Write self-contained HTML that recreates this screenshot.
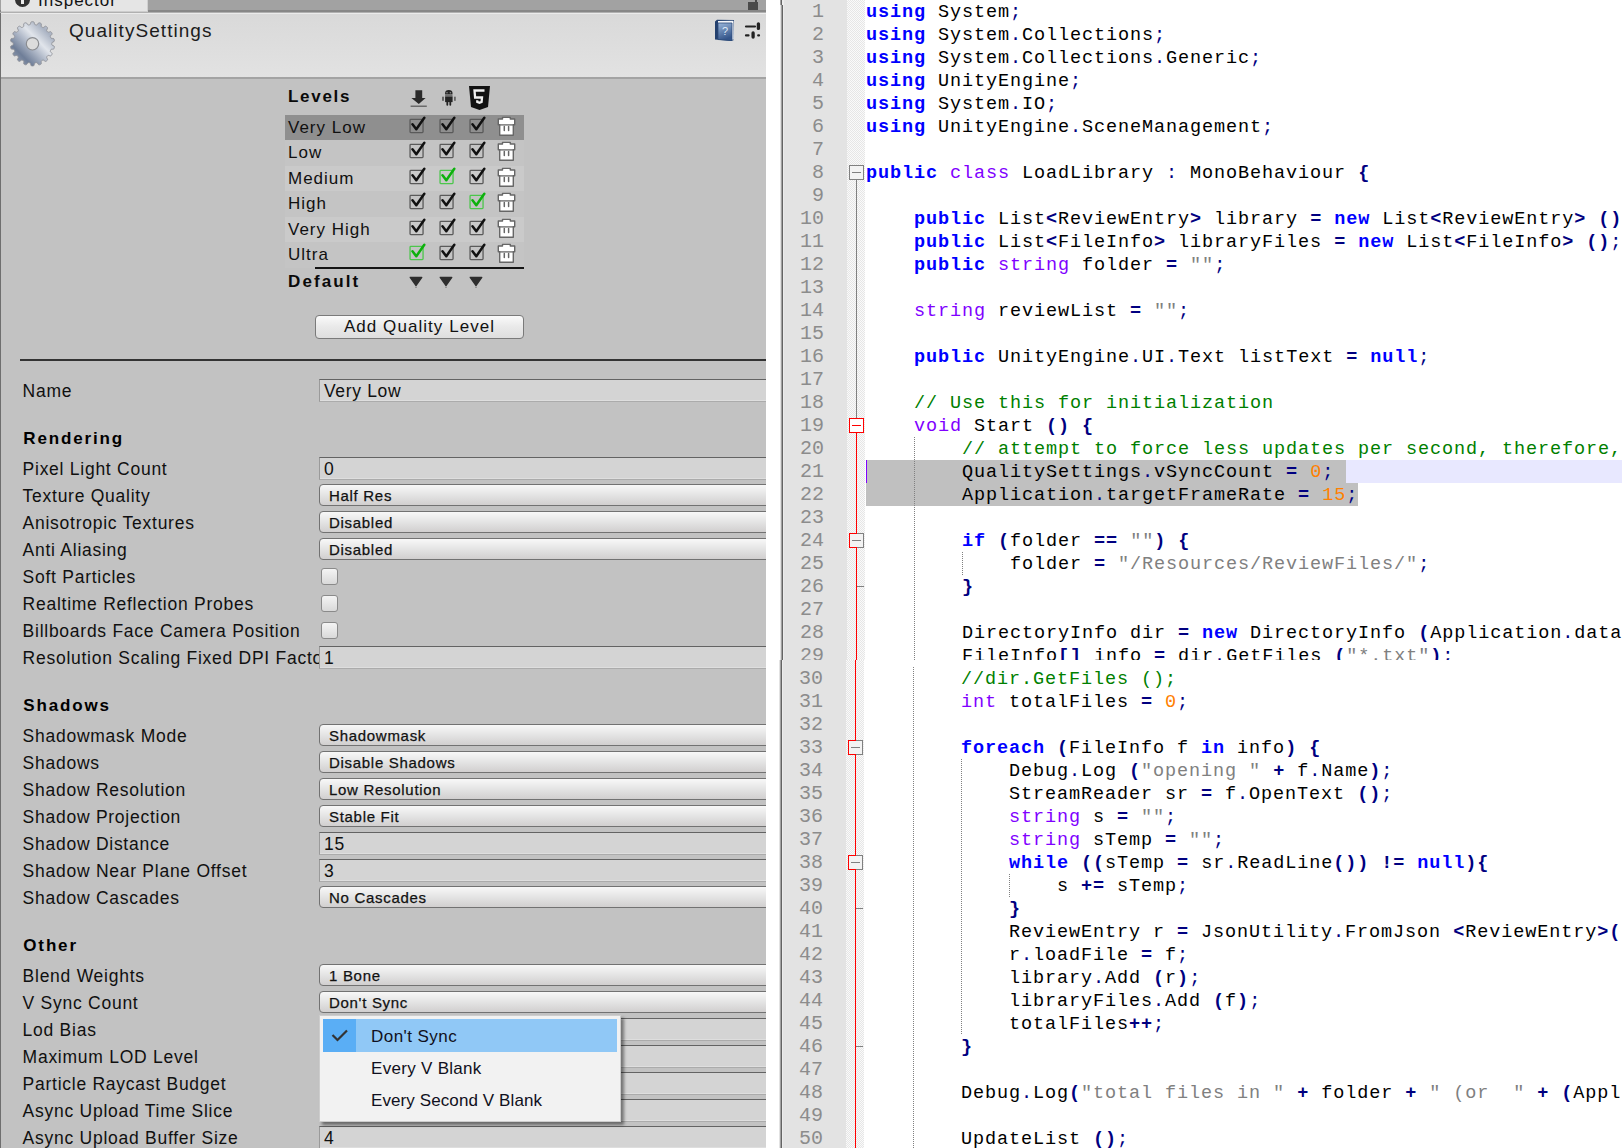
<!DOCTYPE html><html><head><meta charset="utf-8"><style>
*{margin:0;padding:0;box-sizing:border-box}
html,body{width:1622px;height:1148px;overflow:hidden;background:#fff;position:relative}
.abs{position:absolute}
#unity{position:absolute;left:0;top:0;width:766px;height:1148px;background:#c2c2c2;overflow:hidden;font-family:"Liberation Sans",sans-serif;color:#111}
#npp{position:absolute;left:781px;top:0;width:841px;height:1148px;background:#fff;overflow:hidden}
#vline{position:absolute;left:781px;top:5px;width:2px;height:1143px;background:#5e5e5e}
#lnm{position:absolute;left:783px;top:0;width:64px;height:1148px;background:#e3e3e3;border-left:1px solid #ececec}
#fold{position:absolute;left:847px;top:0;width:18px;height:1148px;
 background-color:#fafafa;
 background-image:linear-gradient(45deg,#e6e6e6 25%,transparent 25%,transparent 75%,#e6e6e6 75%),linear-gradient(45deg,#e6e6e6 25%,transparent 25%,transparent 75%,#e6e6e6 75%);
 background-size:2px 2px;background-position:0 0,1px 1px}
#code{position:absolute;left:866px;top:0;width:756px;height:1148px;overflow:hidden;font-family:"Liberation Mono",monospace;font-size:18.5px;letter-spacing:0.9px;line-height:23px}
.ln{position:absolute;left:0;height:23px;white-space:pre;color:#000}
.num{position:absolute;left:783px;width:41px;text-align:right;height:23px;font-family:"Liberation Mono",monospace;font-size:20px;line-height:23px;color:#8c8c8c}
i{font-style:normal}
.kw{color:#0000ff;font-weight:bold}
.ty{color:#8000ff}
.op{color:#000080;font-weight:bold}
.pu{color:#000080}
.st{color:#808080}
.nu{color:#ff8000}
.cm{color:#008000}

.lbl{position:absolute;left:22.6px;font-size:17.5px;letter-spacing:0.74px;white-space:pre;color:#101010;height:20px;line-height:20px}
.hdr{position:absolute;left:23.3px;font-size:17px;font-weight:bold;letter-spacing:1.85px;white-space:pre;color:#000;height:20px;line-height:20px}
.tf{position:absolute;left:319px;width:460px;height:23px;background:#d4d4d4;border-top:1px solid #636363;border-left:1px solid #9a9a9a;border-bottom:1px solid #ababab;box-shadow:inset 0 -1px 0 #dedede}
.tf span{position:absolute;left:4px;top:1px;font-size:17.5px;letter-spacing:0.65px;line-height:20px;color:#101010;white-space:pre}
.pp{position:absolute;left:319px;width:470px;height:22px;border:1px solid #727272;border-radius:4px;background:linear-gradient(#f8f8f8,#e4e4e4 50%,#d1cfcf)}
.pp span{position:absolute;left:9px;top:1.5px;font-size:15px;letter-spacing:0.7px;line-height:18px;color:#111;white-space:pre;-webkit-text-stroke:0.25px #111}
.cb{position:absolute;left:321px;width:17px;height:17px;border:1px solid #8a8a8a;border-radius:3px;background:linear-gradient(#f4f4f4,#d9d9d9)}
.lvl{position:absolute;left:288px;font-size:17px;letter-spacing:1px;white-space:pre;color:#101010;line-height:20px}
.lrow{position:absolute;left:285px;width:239px}
.chk{position:absolute;width:16px;height:16px}
</style></head><body><div id="unity"><div class="abs" style="left:0;top:0;width:1px;height:1148px;background:#6e6e6e"></div><div class="abs" style="left:0;top:0;width:766px;height:13px;background:#a2a2a2;border-bottom:1px solid #b0b0b0;box-shadow:inset 0 -2px 0 #878787"></div><div class="abs" style="left:1px;top:0;width:147px;height:12px;background:#e5e5e5;border-bottom:1px solid #cdcdcd;border-right:1px solid #d0d0d0;overflow:hidden"><div class="abs" style="left:14px;top:-8px;width:15px;height:15px;border-radius:50%;background:#333"></div><div class="abs" style="left:20px;top:0;width:3px;height:4px;background:#eee"></div><div class="abs" style="left:37px;top:-9px;font-size:17px;line-height:20px;letter-spacing:1px;color:#111;font-family:'Liberation Sans',sans-serif">Inspector</div></div><div class="abs" style="left:748px;top:2px;width:10px;height:8px;background:#4a4a4a"></div><div class="abs" style="left:755px;top:0;width:2px;height:3px;background:#4a4a4a"></div><div class="abs" style="left:1px;top:13px;width:765px;height:66px;background:linear-gradient(#d9d9d9,#e2e2e2);border-top:1px solid #ebebeb;border-bottom:2px solid #a3a3a3"></div><svg class="abs" style="left:0;top:0" width="70" height="78" viewBox="0 0 70 78"><defs><linearGradient id="gg" x1="0" y1="1" x2="1" y2="0"><stop offset="0" stop-color="#a3adbe"/><stop offset="0.25" stop-color="#6f7e98"/><stop offset="0.48" stop-color="#b9c1cf"/><stop offset="0.6" stop-color="#e1e5eb"/><stop offset="0.8" stop-color="#a9b2c2"/><stop offset="1" stop-color="#d3d8e0"/></linearGradient></defs><path d="M32.50 21.65 L32.89 21.66 L33.27 21.69 L33.65 21.81 L34.01 22.20 L34.30 23.18 L34.56 24.16 L34.86 24.57 L35.18 24.71 L35.51 24.78 L35.84 24.84 L36.17 24.90 L36.51 24.94 L36.86 24.92 L37.28 24.64 L37.86 23.81 L38.47 22.99 L38.94 22.74 L39.34 22.76 L39.71 22.86 L40.08 22.99 L40.44 23.13 L40.79 23.29 L41.10 23.53 L41.31 24.02 L41.25 25.04 L41.16 26.05 L41.30 26.53 L41.55 26.78 L41.84 26.96 L42.12 27.13 L42.42 27.29 L42.72 27.45 L43.05 27.55 L43.54 27.43 L44.37 26.84 L45.23 26.28 L45.75 26.21 L46.12 26.37 L46.44 26.59 L46.74 26.83 L47.03 27.09 L47.30 27.36 L47.52 27.69 L47.54 28.22 L47.14 29.16 L46.70 30.08 L46.67 30.58 L46.83 30.90 L47.03 31.17 L47.25 31.43 L47.46 31.68 L47.69 31.93 L47.98 32.14 L48.48 32.19 L49.46 31.93 L50.45 31.69 L50.97 31.81 L51.26 32.08 L51.48 32.39 L51.68 32.72 L51.87 33.06 L52.03 33.42 L52.12 33.80 L51.96 34.31 L51.26 35.05 L50.54 35.77 L50.34 36.23 L50.38 36.58 L50.48 36.90 L50.59 37.22 L50.71 37.53 L50.84 37.84 L51.03 38.13 L51.48 38.36 L52.49 38.44 L53.51 38.56 L53.96 38.85 L54.14 39.20 L54.24 39.57 L54.31 39.95 L54.37 40.34 L54.40 40.72 L54.36 41.12 L54.03 41.54 L53.12 42.00 L52.20 42.42 L51.85 42.79 L51.77 43.13 L51.75 43.46 L51.75 43.80 L51.75 44.14 L51.77 44.47 L51.85 44.81 L52.20 45.18 L53.12 45.60 L54.03 46.06 L54.36 46.48 L54.40 46.88 L54.37 47.26 L54.31 47.65 L54.24 48.03 L54.14 48.40 L53.96 48.75 L53.51 49.04 L52.49 49.16 L51.48 49.24 L51.03 49.47 L50.84 49.76 L50.71 50.07 L50.59 50.38 L50.48 50.70 L50.38 51.02 L50.34 51.37 L50.54 51.83 L51.26 52.55 L51.96 53.29 L52.12 53.80 L52.03 54.18 L51.87 54.54 L51.68 54.87 L51.48 55.21 L51.26 55.52 L50.97 55.79 L50.45 55.91 L49.46 55.67 L48.48 55.41 L47.98 55.46 L47.69 55.67 L47.46 55.92 L47.25 56.17 L47.03 56.43 L46.83 56.70 L46.67 57.02 L46.70 57.52 L47.14 58.44 L47.54 59.38 L47.52 59.91 L47.30 60.24 L47.03 60.51 L46.74 60.77 L46.44 61.01 L46.12 61.23 L45.75 61.39 L45.23 61.32 L44.37 60.76 L43.54 60.17 L43.05 60.05 L42.72 60.15 L42.42 60.31 L42.12 60.47 L41.84 60.64 L41.55 60.82 L41.30 61.07 L41.16 61.55 L41.25 62.56 L41.31 63.58 L41.10 64.07 L40.79 64.31 L40.44 64.47 L40.08 64.61 L39.71 64.74 L39.34 64.84 L38.94 64.86 L38.47 64.61 L37.86 63.79 L37.28 62.96 L36.86 62.68 L36.51 62.66 L36.17 62.70 L35.84 62.76 L35.51 62.82 L35.18 62.89 L34.86 63.03 L34.56 63.44 L34.30 64.42 L34.01 65.40 L33.65 65.79 L33.27 65.91 L32.89 65.94 L32.50 65.95 L32.11 65.94 L31.73 65.91 L31.35 65.79 L30.99 65.40 L30.70 64.42 L30.44 63.44 L30.14 63.03 L29.82 62.89 L29.49 62.82 L29.16 62.76 L28.83 62.70 L28.49 62.66 L28.14 62.68 L27.72 62.96 L27.14 63.79 L26.53 64.61 L26.06 64.86 L25.66 64.84 L25.29 64.74 L24.92 64.61 L24.56 64.47 L24.21 64.31 L23.90 64.07 L23.69 63.58 L23.75 62.56 L23.84 61.55 L23.70 61.07 L23.45 60.82 L23.16 60.64 L22.88 60.47 L22.58 60.31 L22.28 60.15 L21.95 60.05 L21.46 60.17 L20.63 60.76 L19.77 61.32 L19.25 61.39 L18.88 61.23 L18.56 61.01 L18.26 60.77 L17.97 60.51 L17.70 60.24 L17.48 59.91 L17.46 59.38 L17.86 58.44 L18.30 57.52 L18.33 57.02 L18.17 56.70 L17.97 56.43 L17.75 56.17 L17.54 55.92 L17.31 55.67 L17.02 55.46 L16.52 55.41 L15.54 55.67 L14.55 55.91 L14.03 55.79 L13.74 55.52 L13.52 55.21 L13.32 54.88 L13.13 54.54 L12.97 54.18 L12.88 53.80 L13.04 53.29 L13.74 52.55 L14.46 51.83 L14.66 51.37 L14.62 51.02 L14.52 50.70 L14.41 50.38 L14.29 50.07 L14.16 49.76 L13.97 49.47 L13.52 49.24 L12.51 49.16 L11.49 49.04 L11.04 48.75 L10.86 48.40 L10.76 48.03 L10.69 47.65 L10.63 47.26 L10.60 46.88 L10.64 46.48 L10.97 46.06 L11.88 45.60 L12.80 45.18 L13.15 44.81 L13.23 44.47 L13.25 44.14 L13.25 43.80 L13.25 43.46 L13.23 43.13 L13.15 42.79 L12.80 42.42 L11.88 42.00 L10.97 41.54 L10.64 41.12 L10.60 40.72 L10.63 40.34 L10.69 39.95 L10.76 39.57 L10.86 39.20 L11.04 38.85 L11.49 38.56 L12.51 38.44 L13.52 38.36 L13.97 38.13 L14.16 37.84 L14.29 37.53 L14.41 37.22 L14.52 36.90 L14.62 36.58 L14.66 36.23 L14.46 35.77 L13.74 35.05 L13.04 34.31 L12.88 33.80 L12.97 33.42 L13.13 33.06 L13.32 32.72 L13.52 32.39 L13.74 32.08 L14.03 31.81 L14.55 31.69 L15.54 31.93 L16.52 32.19 L17.02 32.14 L17.31 31.93 L17.54 31.68 L17.75 31.43 L17.97 31.17 L18.17 30.90 L18.33 30.58 L18.30 30.08 L17.86 29.16 L17.46 28.22 L17.48 27.69 L17.70 27.36 L17.97 27.09 L18.26 26.83 L18.56 26.59 L18.88 26.37 L19.25 26.21 L19.77 26.28 L20.63 26.84 L21.46 27.43 L21.95 27.55 L22.28 27.45 L22.58 27.29 L22.87 27.13 L23.16 26.96 L23.45 26.78 L23.70 26.53 L23.84 26.05 L23.75 25.04 L23.69 24.02 L23.90 23.53 L24.21 23.29 L24.56 23.13 L24.92 22.99 L25.29 22.86 L25.66 22.76 L26.06 22.74 L26.53 22.99 L27.14 23.81 L27.72 24.64 L28.14 24.92 L28.49 24.94 L28.83 24.90 L29.16 24.84 L29.49 24.78 L29.82 24.71 L30.14 24.57 L30.44 24.16 L30.70 23.18 L30.99 22.20 L31.35 21.81 L31.73 21.69 L32.11 21.66 Z" fill="url(#gg)" stroke="#8d9096" stroke-width="0.9"/><circle cx="32.5" cy="43.8" r="6.2" fill="#dcdcdc" stroke="#8a8c90" stroke-width="1.2"/></svg><div class="abs" style="left:69px;top:20px;font-size:19px;line-height:22px;letter-spacing:1.05px;color:#1c1c1c;white-space:pre">QualitySettings</div><svg class="abs" style="left:713px;top:18px" width="24" height="25" viewBox="0 0 24 25"><defs><linearGradient id="hb" x1="0" y1="0" x2="0.3" y2="1"><stop offset="0" stop-color="#9ab6da"/><stop offset="1" stop-color="#34558a"/></linearGradient></defs><path d="M2 3.5 L4 1.8 L21 2 L21 22 L18 23 L2 21.5 Z" fill="#23406e"/><path d="M5 3 L20.5 2.8 L20.8 21.8 L5 21 Z" fill="#f4f6fa"/><path d="M5 5 L19 5 L19 22.5 L5 21.5 Z" fill="url(#hb)" stroke="#2b4a7a" stroke-width="0.8"/><text x="12" y="17" font-size="11" font-family="Liberation Sans" fill="#dfe9f7" text-anchor="middle">?</text></svg><svg class="abs" style="left:743px;top:20px" width="20" height="22" viewBox="0 0 20 22"><path d="M3 6.5 H12 M3 15.4 H5.5 M15.2 15.4 H16" stroke="#222" stroke-width="2.2" stroke-linecap="round"/><path d="M15.4 3.8 V8.4 M10.1 13 V17.1" stroke="#222" stroke-width="3.3" stroke-linecap="round"/></svg><div class="abs" style="left:288px;top:87px;font-size:17px;font-weight:bold;letter-spacing:1.7px;line-height:20px;color:#0a0a0a">Levels</div><svg class="abs" style="left:409px;top:88px" width="20" height="20" viewBox="0 0 20 20"><path d="M6.4 2.2 H13.2 V9.9 H16.6 L9.8 16 L2.4 9.9 H6.4 Z" fill="#2a2a2a"/><path d="M1.6 18.2 H17.8" stroke="#555" stroke-width="1.2"/></svg><svg class="abs" style="left:440px;top:88px" width="18" height="19" viewBox="0 0 18 19"><path d="M5.1 6.6 V5 Q5.1 2.1 8.8 2.1 Q12.5 2.1 12.5 5 V6.6 Z" fill="#242424"/><circle cx="7" cy="4.7" r="0.8" fill="#8a8a8a"/><circle cx="10.4" cy="4.7" r="0.8" fill="#8a8a8a"/><rect x="5.1" y="7" width="7.4" height="1.5" fill="#707070"/><rect x="5.1" y="8.5" width="7.5" height="5.6" fill="#242424"/><rect x="2" y="8.7" width="2" height="4.1" fill="#666"/><rect x="14" y="8.7" width="1.8" height="4.1" fill="#666"/><rect x="6.4" y="13.5" width="1.8" height="4.2" rx="0.9" fill="#242424"/><rect x="9.4" y="13.5" width="1.8" height="4.2" rx="0.9" fill="#242424"/></svg><svg class="abs" style="left:468px;top:85px" width="23" height="26" viewBox="0 0 23 26"><path d="M1 1 H22 L20 22 L11.5 25 L3 22 Z" fill="#111"/><path d="M16.5 5.5 H6.5 L7.1 12.5 H14 L13.6 17 L11.5 17.7 L9.3 17 L9.2 15.3" fill="none" stroke="#eee" stroke-width="2.3"/></svg><div class="lrow" style="top:115px;height:25px;background:#8f8f8f"></div><div class="lvl" style="top:118px">Very Low</div><svg class="chk" style="left:408px;top:115px;width:18px;height:19px" width="18" height="19" viewBox="0 0 18 19"><rect x="2.05" y="4.45" width="13" height="13.1" rx="0.8" fill="none" stroke="#5a5a5a" stroke-width="1.3"/><path d="M4.5 9.3 L8.3 14.3 L16.3 2.8" fill="none" stroke="#111" stroke-width="2.5" stroke-linejoin="round" stroke-linecap="round"/></svg><svg class="chk" style="left:437.5px;top:115px;width:18px;height:19px" width="18" height="19" viewBox="0 0 18 19"><rect x="2.05" y="4.45" width="13" height="13.1" rx="0.8" fill="none" stroke="#5a5a5a" stroke-width="1.3"/><path d="M4.5 9.3 L8.3 14.3 L16.3 2.8" fill="none" stroke="#111" stroke-width="2.5" stroke-linejoin="round" stroke-linecap="round"/></svg><svg class="chk" style="left:467.5px;top:115px;width:18px;height:19px" width="18" height="19" viewBox="0 0 18 19"><rect x="2.05" y="4.45" width="13" height="13.1" rx="0.8" fill="none" stroke="#5a5a5a" stroke-width="1.3"/><path d="M4.5 9.3 L8.3 14.3 L16.3 2.8" fill="none" stroke="#111" stroke-width="2.5" stroke-linejoin="round" stroke-linecap="round"/></svg><svg class="chk" style="left:497px;top:116px;width:19px;height:21px" width="19" height="21" viewBox="0 0 19 21"><path d="M1.3 3.0 H5.5 V1.4 H13.3 V3.0 H17.7 V8.8 H16.3 V19.3 H2.7 V8.8 H1.3 Z" fill="#fff" stroke="#666" stroke-width="1.4" stroke-linejoin="round"/><path d="M2.7 8.9 H16.3" stroke="#666" stroke-width="1.3"/><path d="M7.3 10.6 V14.6 M11.6 10.6 V14.6" stroke="#666" stroke-width="1.5" stroke-linecap="round"/></svg><div class="lrow" style="top:140px;height:26px;background:#c4c4c4"></div><div class="lvl" style="top:143px">Low</div><svg class="chk" style="left:408px;top:140px;width:18px;height:19px" width="18" height="19" viewBox="0 0 18 19"><rect x="2.05" y="4.45" width="13" height="13.1" rx="0.8" fill="none" stroke="#5a5a5a" stroke-width="1.3"/><path d="M4.5 9.3 L8.3 14.3 L16.3 2.8" fill="none" stroke="#111" stroke-width="2.5" stroke-linejoin="round" stroke-linecap="round"/></svg><svg class="chk" style="left:437.5px;top:140px;width:18px;height:19px" width="18" height="19" viewBox="0 0 18 19"><rect x="2.05" y="4.45" width="13" height="13.1" rx="0.8" fill="none" stroke="#5a5a5a" stroke-width="1.3"/><path d="M4.5 9.3 L8.3 14.3 L16.3 2.8" fill="none" stroke="#111" stroke-width="2.5" stroke-linejoin="round" stroke-linecap="round"/></svg><svg class="chk" style="left:467.5px;top:140px;width:18px;height:19px" width="18" height="19" viewBox="0 0 18 19"><rect x="2.05" y="4.45" width="13" height="13.1" rx="0.8" fill="none" stroke="#5a5a5a" stroke-width="1.3"/><path d="M4.5 9.3 L8.3 14.3 L16.3 2.8" fill="none" stroke="#111" stroke-width="2.5" stroke-linejoin="round" stroke-linecap="round"/></svg><svg class="chk" style="left:497px;top:141px;width:19px;height:21px" width="19" height="21" viewBox="0 0 19 21"><path d="M1.3 3.0 H5.5 V1.4 H13.3 V3.0 H17.7 V8.8 H16.3 V19.3 H2.7 V8.8 H1.3 Z" fill="#fff" stroke="#666" stroke-width="1.4" stroke-linejoin="round"/><path d="M2.7 8.9 H16.3" stroke="#666" stroke-width="1.3"/><path d="M7.3 10.6 V14.6 M11.6 10.6 V14.6" stroke="#666" stroke-width="1.5" stroke-linecap="round"/></svg><div class="lrow" style="top:166px;height:25px;background:#cacaca"></div><div class="lvl" style="top:169px">Medium</div><svg class="chk" style="left:408px;top:166px;width:18px;height:19px" width="18" height="19" viewBox="0 0 18 19"><rect x="2.05" y="4.45" width="13" height="13.1" rx="0.8" fill="none" stroke="#5a5a5a" stroke-width="1.3"/><path d="M4.5 9.3 L8.3 14.3 L16.3 2.8" fill="none" stroke="#111" stroke-width="2.5" stroke-linejoin="round" stroke-linecap="round"/></svg><svg class="chk" style="left:437.5px;top:166px;width:18px;height:19px" width="18" height="19" viewBox="0 0 18 19"><rect x="2.05" y="4.45" width="13" height="13.1" rx="0.8" fill="none" stroke="#4cc64c" stroke-width="1.3"/><path d="M4.5 9.3 L8.3 14.3 L16.3 2.8" fill="none" stroke="#0db10d" stroke-width="2.5" stroke-linejoin="round" stroke-linecap="round"/></svg><svg class="chk" style="left:467.5px;top:166px;width:18px;height:19px" width="18" height="19" viewBox="0 0 18 19"><rect x="2.05" y="4.45" width="13" height="13.1" rx="0.8" fill="none" stroke="#5a5a5a" stroke-width="1.3"/><path d="M4.5 9.3 L8.3 14.3 L16.3 2.8" fill="none" stroke="#111" stroke-width="2.5" stroke-linejoin="round" stroke-linecap="round"/></svg><svg class="chk" style="left:497px;top:167px;width:19px;height:21px" width="19" height="21" viewBox="0 0 19 21"><path d="M1.3 3.0 H5.5 V1.4 H13.3 V3.0 H17.7 V8.8 H16.3 V19.3 H2.7 V8.8 H1.3 Z" fill="#fff" stroke="#666" stroke-width="1.4" stroke-linejoin="round"/><path d="M2.7 8.9 H16.3" stroke="#666" stroke-width="1.3"/><path d="M7.3 10.6 V14.6 M11.6 10.6 V14.6" stroke="#666" stroke-width="1.5" stroke-linecap="round"/></svg><div class="lrow" style="top:191px;height:26px;background:#c4c4c4"></div><div class="lvl" style="top:194px">High</div><svg class="chk" style="left:408px;top:191px;width:18px;height:19px" width="18" height="19" viewBox="0 0 18 19"><rect x="2.05" y="4.45" width="13" height="13.1" rx="0.8" fill="none" stroke="#5a5a5a" stroke-width="1.3"/><path d="M4.5 9.3 L8.3 14.3 L16.3 2.8" fill="none" stroke="#111" stroke-width="2.5" stroke-linejoin="round" stroke-linecap="round"/></svg><svg class="chk" style="left:437.5px;top:191px;width:18px;height:19px" width="18" height="19" viewBox="0 0 18 19"><rect x="2.05" y="4.45" width="13" height="13.1" rx="0.8" fill="none" stroke="#5a5a5a" stroke-width="1.3"/><path d="M4.5 9.3 L8.3 14.3 L16.3 2.8" fill="none" stroke="#111" stroke-width="2.5" stroke-linejoin="round" stroke-linecap="round"/></svg><svg class="chk" style="left:467.5px;top:191px;width:18px;height:19px" width="18" height="19" viewBox="0 0 18 19"><rect x="2.05" y="4.45" width="13" height="13.1" rx="0.8" fill="none" stroke="#4cc64c" stroke-width="1.3"/><path d="M4.5 9.3 L8.3 14.3 L16.3 2.8" fill="none" stroke="#0db10d" stroke-width="2.5" stroke-linejoin="round" stroke-linecap="round"/></svg><svg class="chk" style="left:497px;top:192px;width:19px;height:21px" width="19" height="21" viewBox="0 0 19 21"><path d="M1.3 3.0 H5.5 V1.4 H13.3 V3.0 H17.7 V8.8 H16.3 V19.3 H2.7 V8.8 H1.3 Z" fill="#fff" stroke="#666" stroke-width="1.4" stroke-linejoin="round"/><path d="M2.7 8.9 H16.3" stroke="#666" stroke-width="1.3"/><path d="M7.3 10.6 V14.6 M11.6 10.6 V14.6" stroke="#666" stroke-width="1.5" stroke-linecap="round"/></svg><div class="lrow" style="top:217px;height:25px;background:#cacaca"></div><div class="lvl" style="top:220px">Very High</div><svg class="chk" style="left:408px;top:217px;width:18px;height:19px" width="18" height="19" viewBox="0 0 18 19"><rect x="2.05" y="4.45" width="13" height="13.1" rx="0.8" fill="none" stroke="#5a5a5a" stroke-width="1.3"/><path d="M4.5 9.3 L8.3 14.3 L16.3 2.8" fill="none" stroke="#111" stroke-width="2.5" stroke-linejoin="round" stroke-linecap="round"/></svg><svg class="chk" style="left:437.5px;top:217px;width:18px;height:19px" width="18" height="19" viewBox="0 0 18 19"><rect x="2.05" y="4.45" width="13" height="13.1" rx="0.8" fill="none" stroke="#5a5a5a" stroke-width="1.3"/><path d="M4.5 9.3 L8.3 14.3 L16.3 2.8" fill="none" stroke="#111" stroke-width="2.5" stroke-linejoin="round" stroke-linecap="round"/></svg><svg class="chk" style="left:467.5px;top:217px;width:18px;height:19px" width="18" height="19" viewBox="0 0 18 19"><rect x="2.05" y="4.45" width="13" height="13.1" rx="0.8" fill="none" stroke="#5a5a5a" stroke-width="1.3"/><path d="M4.5 9.3 L8.3 14.3 L16.3 2.8" fill="none" stroke="#111" stroke-width="2.5" stroke-linejoin="round" stroke-linecap="round"/></svg><svg class="chk" style="left:497px;top:218px;width:19px;height:21px" width="19" height="21" viewBox="0 0 19 21"><path d="M1.3 3.0 H5.5 V1.4 H13.3 V3.0 H17.7 V8.8 H16.3 V19.3 H2.7 V8.8 H1.3 Z" fill="#fff" stroke="#666" stroke-width="1.4" stroke-linejoin="round"/><path d="M2.7 8.9 H16.3" stroke="#666" stroke-width="1.3"/><path d="M7.3 10.6 V14.6 M11.6 10.6 V14.6" stroke="#666" stroke-width="1.5" stroke-linecap="round"/></svg><div class="lrow" style="top:242px;height:26px;background:#c4c4c4"></div><div class="lvl" style="top:245px">Ultra</div><svg class="chk" style="left:408px;top:242px;width:18px;height:19px" width="18" height="19" viewBox="0 0 18 19"><rect x="2.05" y="4.45" width="13" height="13.1" rx="0.8" fill="none" stroke="#4cc64c" stroke-width="1.3"/><path d="M4.5 9.3 L8.3 14.3 L16.3 2.8" fill="none" stroke="#0db10d" stroke-width="2.5" stroke-linejoin="round" stroke-linecap="round"/></svg><svg class="chk" style="left:437.5px;top:242px;width:18px;height:19px" width="18" height="19" viewBox="0 0 18 19"><rect x="2.05" y="4.45" width="13" height="13.1" rx="0.8" fill="none" stroke="#5a5a5a" stroke-width="1.3"/><path d="M4.5 9.3 L8.3 14.3 L16.3 2.8" fill="none" stroke="#111" stroke-width="2.5" stroke-linejoin="round" stroke-linecap="round"/></svg><svg class="chk" style="left:467.5px;top:242px;width:18px;height:19px" width="18" height="19" viewBox="0 0 18 19"><rect x="2.05" y="4.45" width="13" height="13.1" rx="0.8" fill="none" stroke="#5a5a5a" stroke-width="1.3"/><path d="M4.5 9.3 L8.3 14.3 L16.3 2.8" fill="none" stroke="#111" stroke-width="2.5" stroke-linejoin="round" stroke-linecap="round"/></svg><svg class="chk" style="left:497px;top:243px;width:19px;height:21px" width="19" height="21" viewBox="0 0 19 21"><path d="M1.3 3.0 H5.5 V1.4 H13.3 V3.0 H17.7 V8.8 H16.3 V19.3 H2.7 V8.8 H1.3 Z" fill="#fff" stroke="#666" stroke-width="1.4" stroke-linejoin="round"/><path d="M2.7 8.9 H16.3" stroke="#666" stroke-width="1.3"/><path d="M7.3 10.6 V14.6 M11.6 10.6 V14.6" stroke="#666" stroke-width="1.5" stroke-linecap="round"/></svg><div class="abs" style="left:315px;top:267px;width:209px;height:2px;background:#141414"></div><div class="abs" style="left:288px;top:272px;font-size:17px;font-weight:bold;letter-spacing:2.1px;line-height:20px;color:#0a0a0a">Default</div><svg class="abs" style="left:408.4px;top:276px" width="16" height="13" viewBox="0 0 16 13"><path d="M2.2 1.4 H13.8 L8 9.6 Z" fill="#2e2e2e" stroke="#2e2e2e" stroke-width="1.3" stroke-linejoin="round"/><path d="M7 11.3 H9" stroke="#8a8a8a" stroke-width="1"/></svg><svg class="abs" style="left:438.3px;top:276px" width="16" height="13" viewBox="0 0 16 13"><path d="M2.2 1.4 H13.8 L8 9.6 Z" fill="#2e2e2e" stroke="#2e2e2e" stroke-width="1.3" stroke-linejoin="round"/><path d="M7 11.3 H9" stroke="#8a8a8a" stroke-width="1"/></svg><svg class="abs" style="left:468.4px;top:276px" width="16" height="13" viewBox="0 0 16 13"><path d="M2.2 1.4 H13.8 L8 9.6 Z" fill="#2e2e2e" stroke="#2e2e2e" stroke-width="1.3" stroke-linejoin="round"/><path d="M7 11.3 H9" stroke="#8a8a8a" stroke-width="1"/></svg><div class="abs" style="left:315px;top:315px;width:209px;height:24px;border:1px solid #7a7a7a;border-radius:4px;background:linear-gradient(#fafafa,#e9e9e9 50%,#dedede)"><div class="abs" style="left:0;top:1px;width:207px;text-align:center;font-size:17px;letter-spacing:1.05px;line-height:20px;color:#111">Add Quality Level</div></div><div class="abs" style="left:20px;top:359px;width:746px;height:2px;background:#333"></div><div class="lbl" style="top:381px">Name</div><div class="tf" style="top:379px"><span>Very Low</span></div><div class="hdr" style="top:429px">Rendering</div><div class="lbl" style="top:459px">Pixel Light Count</div><div class="tf" style="top:457px"><span>0</span></div><div class="lbl" style="top:486px">Texture Quality</div><div class="pp" style="top:484px"><span>Half Res</span></div><div class="lbl" style="top:513px">Anisotropic Textures</div><div class="pp" style="top:511px"><span>Disabled</span></div><div class="lbl" style="top:540px">Anti Aliasing</div><div class="pp" style="top:538px"><span>Disabled</span></div><div class="lbl" style="top:567px">Soft Particles</div><div class="cb" style="top:568px"></div><div class="lbl" style="top:594px">Realtime Reflection Probes</div><div class="cb" style="top:595px"></div><div class="lbl" style="top:621px">Billboards Face Camera Position</div><div class="cb" style="top:622px"></div><div class="lbl" style="top:648px">Resolution Scaling Fixed DPI Factor</div><div class="tf" style="top:646px"><span>1</span></div><div class="hdr" style="top:696px">Shadows</div><div class="lbl" style="top:726px">Shadowmask Mode</div><div class="pp" style="top:724px"><span>Shadowmask</span></div><div class="lbl" style="top:753px">Shadows</div><div class="pp" style="top:751px"><span>Disable Shadows</span></div><div class="lbl" style="top:780px">Shadow Resolution</div><div class="pp" style="top:778px"><span>Low Resolution</span></div><div class="lbl" style="top:807px">Shadow Projection</div><div class="pp" style="top:805px"><span>Stable Fit</span></div><div class="lbl" style="top:834px">Shadow Distance</div><div class="tf" style="top:832px"><span>15</span></div><div class="lbl" style="top:861px">Shadow Near Plane Offset</div><div class="tf" style="top:859px"><span>3</span></div><div class="lbl" style="top:888px">Shadow Cascades</div><div class="pp" style="top:886px"><span>No Cascades</span></div><div class="hdr" style="top:936px">Other</div><div class="lbl" style="top:966px">Blend Weights</div><div class="pp" style="top:964px"><span>1 Bone</span></div><div class="lbl" style="top:993px">V Sync Count</div><div class="pp" style="top:991px"><span>Don't Sync</span></div><div class="lbl" style="top:1020px">Lod Bias</div><div class="tf" style="top:1018px"><span></span></div><div class="lbl" style="top:1047px">Maximum LOD Level</div><div class="tf" style="top:1045px"><span></span></div><div class="lbl" style="top:1074px">Particle Raycast Budget</div><div class="tf" style="top:1072px"><span></span></div><div class="lbl" style="top:1101px">Async Upload Time Slice</div><div class="tf" style="top:1099px"><span></span></div><div class="lbl" style="top:1128px">Async Upload Buffer Size</div><div class="tf" style="top:1126px"><span>4</span></div><div class="abs" style="left:319px;top:1015px;width:302px;height:107px;background:#f2f2f2;border:1px solid #cdcdcd;box-shadow:3px 3px 3px rgba(0,0,0,0.45)"><div class="abs" style="left:3px;top:3px;width:294px;height:33px;background:#90c8f6"></div><div class="abs" style="left:3px;top:3px;width:33px;height:33px;background:#5aaef5"></div><svg class="abs" style="left:10px;top:11px" width="20" height="16" viewBox="0 0 20 16"><path d="M2.5 8 L7.5 13 L17 3.5" fill="none" stroke="#333" stroke-width="2.2"/></svg><div class="abs" style="left:51px;top:11px;font-size:17px;letter-spacing:0.45px;line-height:20px;color:#101020;white-space:pre">Don't Sync</div><div class="abs" style="left:51px;top:43px;font-size:17px;letter-spacing:0.3px;line-height:20px;color:#101020;white-space:pre">Every V Blank</div><div class="abs" style="left:51px;top:75px;font-size:17px;letter-spacing:0.1px;line-height:20px;color:#101020;white-space:pre">Every Second V Blank</div></div></div><div class="abs" style="left:766px;top:0;width:856px;height:660px;overflow:hidden"><div class="abs" style="left:-766px;top:0;width:1622px;height:1148px"><div class="abs" style="left:780px;top:0;width:3px;height:1148px;background:linear-gradient(90deg,#e2e2e2 0 33.3%,#a2a2a2 33.3% 66.6%,#646464 66.6%)"></div><div id="lnm"></div><div id="fold"></div><div id="code"><div class="abs" style="left:0;top:460px;width:756px;height:23px;background:#e8e8ff"></div><div class="abs" style="left:0;top:460px;width:480px;height:23px;background:#c0c0c0"></div><div class="abs" style="left:0;top:483px;width:492px;height:23px;background:#c0c0c0"></div><div class="ln" style="top:1px"><i class="kw">using</i> System<i class="pu">;</i></div><div class="ln" style="top:24px"><i class="kw">using</i> System<i class="pu">.</i>Collections<i class="pu">;</i></div><div class="ln" style="top:47px"><i class="kw">using</i> System<i class="pu">.</i>Collections<i class="pu">.</i>Generic<i class="pu">;</i></div><div class="ln" style="top:70px"><i class="kw">using</i> UnityEngine<i class="pu">;</i></div><div class="ln" style="top:93px"><i class="kw">using</i> System<i class="pu">.</i>IO<i class="pu">;</i></div><div class="ln" style="top:116px"><i class="kw">using</i> UnityEngine<i class="pu">.</i>SceneManagement<i class="pu">;</i></div><div class="ln" style="top:139px">&#8203;</div><div class="ln" style="top:162px"><i class="kw">public</i> <i class="ty">class</i> LoadLibrary <i class="pu">:</i> MonoBehaviour <i class="op">{</i></div><div class="ln" style="top:185px">&#8203;</div><div class="ln" style="top:208px">    <i class="kw">public</i> List<i class="op">&lt;</i>ReviewEntry<i class="op">&gt;</i> library <i class="op">=</i> <i class="kw">new</i> List<i class="op">&lt;</i>ReviewEntry<i class="op">&gt;</i> <i class="op">(</i><i class="op">)</i><i class="pu">;</i></div><div class="ln" style="top:231px">    <i class="kw">public</i> List<i class="op">&lt;</i>FileInfo<i class="op">&gt;</i> libraryFiles <i class="op">=</i> <i class="kw">new</i> List<i class="op">&lt;</i>FileInfo<i class="op">&gt;</i> <i class="op">(</i><i class="op">)</i><i class="pu">;</i></div><div class="ln" style="top:254px">    <i class="kw">public</i> <i class="ty">string</i> folder <i class="op">=</i> <i class="st">&quot;&quot;</i><i class="pu">;</i></div><div class="ln" style="top:277px">&#8203;</div><div class="ln" style="top:300px">    <i class="ty">string</i> reviewList <i class="op">=</i> <i class="st">&quot;&quot;</i><i class="pu">;</i></div><div class="ln" style="top:323px">&#8203;</div><div class="ln" style="top:346px">    <i class="kw">public</i> UnityEngine<i class="pu">.</i>UI<i class="pu">.</i>Text listText <i class="op">=</i> <i class="kw">null</i><i class="pu">;</i></div><div class="ln" style="top:369px">&#8203;</div><div class="ln" style="top:392px">    <i class="cm">// Use this for initialization</i></div><div class="ln" style="top:415px">    <i class="ty">void</i> Start <i class="op">(</i><i class="op">)</i> <i class="op">{</i></div><div class="ln" style="top:438px">        <i class="cm">// attempt to force less updates per second, therefore, less battery</i></div><div class="ln" style="top:461px">        QualitySettings<i class="pu">.</i>vSyncCount <i class="op">=</i> <i class="nu">0</i><i class="pu">;</i></div><div class="ln" style="top:484px">        Application<i class="pu">.</i>targetFrameRate <i class="op">=</i> <i class="nu">15</i><i class="pu">;</i></div><div class="ln" style="top:507px">&#8203;</div><div class="ln" style="top:530px">        <i class="kw">if</i> <i class="op">(</i>folder <i class="op">=</i><i class="op">=</i> <i class="st">&quot;&quot;</i><i class="op">)</i> <i class="op">{</i></div><div class="ln" style="top:553px">            folder <i class="op">=</i> <i class="st">&quot;/Resources/ReviewFiles/&quot;</i><i class="pu">;</i></div><div class="ln" style="top:576px">        <i class="op">}</i></div><div class="ln" style="top:599px">&#8203;</div><div class="ln" style="top:622px">        DirectoryInfo dir <i class="op">=</i> <i class="kw">new</i> DirectoryInfo <i class="op">(</i>Application<i class="pu">.</i>dataPath <i class="op">+</i> folder<i class="op">)</i><i class="pu">;</i></div><div class="ln" style="top:645px">        FileInfo<i class="op">[</i><i class="op">]</i> info <i class="op">=</i> dir<i class="pu">.</i>GetFiles <i class="op">(</i><i class="st">&quot;*.txt&quot;</i><i class="op">)</i><i class="pu">;</i></div><div class="ln" style="top:668px">        <i class="cm">//dir.GetFiles ();</i></div><div class="ln" style="top:691px">        <i class="ty">int</i> totalFiles <i class="op">=</i> <i class="nu">0</i><i class="pu">;</i></div><div class="ln" style="top:714px">&#8203;</div><div class="ln" style="top:737px">        <i class="kw">foreach</i> <i class="op">(</i>FileInfo f <i class="kw">in</i> info<i class="op">)</i> <i class="op">{</i></div><div class="ln" style="top:760px">            Debug<i class="pu">.</i>Log <i class="op">(</i><i class="st">&quot;opening &quot;</i> <i class="op">+</i> f<i class="pu">.</i>Name<i class="op">)</i><i class="pu">;</i></div><div class="ln" style="top:783px">            StreamReader sr <i class="op">=</i> f<i class="pu">.</i>OpenText <i class="op">(</i><i class="op">)</i><i class="pu">;</i></div><div class="ln" style="top:806px">            <i class="ty">string</i> s <i class="op">=</i> <i class="st">&quot;&quot;</i><i class="pu">;</i></div><div class="ln" style="top:829px">            <i class="ty">string</i> sTemp <i class="op">=</i> <i class="st">&quot;&quot;</i><i class="pu">;</i></div><div class="ln" style="top:852px">            <i class="kw">while</i> <i class="op">(</i><i class="op">(</i>sTemp <i class="op">=</i> sr<i class="pu">.</i>ReadLine<i class="op">(</i><i class="op">)</i><i class="op">)</i> <i class="op">!</i><i class="op">=</i> <i class="kw">null</i><i class="op">)</i><i class="op">{</i></div><div class="ln" style="top:875px">                s <i class="op">+</i><i class="op">=</i> sTemp<i class="pu">;</i></div><div class="ln" style="top:898px">            <i class="op">}</i></div><div class="ln" style="top:921px">            ReviewEntry r <i class="op">=</i> JsonUtility<i class="pu">.</i>FromJson <i class="op">&lt;</i>ReviewEntry<i class="op">&gt;</i><i class="op">(</i>s<i class="op">)</i><i class="pu">;</i></div><div class="ln" style="top:944px">            r<i class="pu">.</i>loadFile <i class="op">=</i> f<i class="pu">;</i></div><div class="ln" style="top:967px">            library<i class="pu">.</i>Add <i class="op">(</i>r<i class="op">)</i><i class="pu">;</i></div><div class="ln" style="top:990px">            libraryFiles<i class="pu">.</i>Add <i class="op">(</i>f<i class="op">)</i><i class="pu">;</i></div><div class="ln" style="top:1013px">            totalFiles<i class="op">+</i><i class="op">+</i><i class="pu">;</i></div><div class="ln" style="top:1036px">        <i class="op">}</i></div><div class="ln" style="top:1059px">&#8203;</div><div class="ln" style="top:1082px">        Debug<i class="pu">.</i>Log<i class="op">(</i><i class="st">&quot;total files in &quot;</i> <i class="op">+</i> folder <i class="op">+</i> <i class="st">&quot; (or  &quot;</i> <i class="op">+</i> <i class="op">(</i>Application<i class="pu">.</i>dataPath <i class="op">+</i> folder<i class="op">)</i> <i class="op">+</i> <i class="st">&quot;): &quot;</i> <i class="op">+</i> totalFiles<i class="op">)</i><i class="pu">;</i></div><div class="ln" style="top:1105px">&#8203;</div><div class="ln" style="top:1128px">        UpdateList <i class="op">(</i><i class="op">)</i><i class="pu">;</i></div></div><div class="abs" style="left:856px;top:180px;width:1px;height:238px;background:#808080"></div><div class="abs" style="left:856px;top:433px;width:1px;height:1148px;background:#ff0000"></div><div class="abs" style="left:849px;top:165px;width:15px;height:15px;border:1px solid #808080;background:#f3f3f3"></div><div class="abs" style="left:852px;top:172px;width:9px;height:1px;background:#808080"></div><div class="abs" style="left:849px;top:418px;width:15px;height:15px;border:1px solid #ff0000;background:#fff"></div><div class="abs" style="left:852px;top:425px;width:9px;height:1px;background:#ff0000"></div><div class="abs" style="left:849px;top:533px;width:15px;height:15px;border:1px solid #808080;background:#f3f3f3"></div><div class="abs" style="left:849px;top:533px;width:8px;height:15px;border:1px solid #ff0000;border-right:none"></div><div class="abs" style="left:852px;top:540px;width:9px;height:1px;background:#808080"></div><div class="abs" style="left:849px;top:740px;width:15px;height:15px;border:1px solid #808080;background:#f3f3f3"></div><div class="abs" style="left:849px;top:740px;width:8px;height:15px;border:1px solid #ff0000;border-right:none"></div><div class="abs" style="left:852px;top:747px;width:9px;height:1px;background:#808080"></div><div class="abs" style="left:849px;top:855px;width:15px;height:15px;border:1px solid #808080;background:#f3f3f3"></div><div class="abs" style="left:849px;top:855px;width:8px;height:15px;border:1px solid #ff0000;border-right:none"></div><div class="abs" style="left:852px;top:862px;width:9px;height:1px;background:#808080"></div><div class="abs" style="left:857px;top:586px;width:7px;height:1px;background:#808080"></div><div class="abs" style="left:857px;top:908px;width:7px;height:1px;background:#808080"></div><div class="abs" style="left:857px;top:1046px;width:7px;height:1px;background:#808080"></div><div class="abs" style="left:914px;top:437px;width:1px;height:713px;background-image:linear-gradient(#808080 50%,transparent 50%);background-size:1px 2px"></div><div class="abs" style="left:962px;top:552px;width:1px;height:23px;background-image:linear-gradient(#808080 50%,transparent 50%);background-size:1px 2px"></div><div class="abs" style="left:962px;top:759px;width:1px;height:276px;background-image:linear-gradient(#808080 50%,transparent 50%);background-size:1px 2px"></div><div class="abs" style="left:1010px;top:874px;width:1px;height:23px;background-image:linear-gradient(#808080 50%,transparent 50%);background-size:1px 2px"></div><div class="abs" style="left:866px;top:460px;width:1px;height:23px;background:#8000ff"></div><div class="num" style="top:0px">1</div><div class="num" style="top:23px">2</div><div class="num" style="top:46px">3</div><div class="num" style="top:69px">4</div><div class="num" style="top:92px">5</div><div class="num" style="top:115px">6</div><div class="num" style="top:138px">7</div><div class="num" style="top:161px">8</div><div class="num" style="top:184px">9</div><div class="num" style="top:207px">10</div><div class="num" style="top:230px">11</div><div class="num" style="top:253px">12</div><div class="num" style="top:276px">13</div><div class="num" style="top:299px">14</div><div class="num" style="top:322px">15</div><div class="num" style="top:345px">16</div><div class="num" style="top:368px">17</div><div class="num" style="top:391px">18</div><div class="num" style="top:414px">19</div><div class="num" style="top:437px">20</div><div class="num" style="top:460px">21</div><div class="num" style="top:483px">22</div><div class="num" style="top:506px">23</div><div class="num" style="top:529px">24</div><div class="num" style="top:552px">25</div><div class="num" style="top:575px">26</div><div class="num" style="top:598px">27</div><div class="num" style="top:621px">28</div><div class="num" style="top:644px">29</div><div class="num" style="top:667px">30</div><div class="num" style="top:690px">31</div><div class="num" style="top:713px">32</div><div class="num" style="top:736px">33</div><div class="num" style="top:759px">34</div><div class="num" style="top:782px">35</div><div class="num" style="top:805px">36</div><div class="num" style="top:828px">37</div><div class="num" style="top:851px">38</div><div class="num" style="top:874px">39</div><div class="num" style="top:897px">40</div><div class="num" style="top:920px">41</div><div class="num" style="top:943px">42</div><div class="num" style="top:966px">43</div><div class="num" style="top:989px">44</div><div class="num" style="top:1012px">45</div><div class="num" style="top:1035px">46</div><div class="num" style="top:1058px">47</div><div class="num" style="top:1081px">48</div><div class="num" style="top:1104px">49</div><div class="num" style="top:1127px">50</div></div></div><div class="abs" style="left:766px;top:660px;width:856px;height:488px;overflow:hidden"><div class="abs" style="left:-767px;top:-660px;width:1622px;height:1148px"><div class="abs" style="left:780px;top:0;width:3px;height:1148px;background:linear-gradient(90deg,#e2e2e2 0 33.3%,#a2a2a2 33.3% 66.6%,#646464 66.6%)"></div><div id="lnm"></div><div id="fold"></div><div id="code"><div class="abs" style="left:0;top:460px;width:756px;height:23px;background:#e8e8ff"></div><div class="abs" style="left:0;top:460px;width:480px;height:23px;background:#c0c0c0"></div><div class="abs" style="left:0;top:483px;width:492px;height:23px;background:#c0c0c0"></div><div class="ln" style="top:1px"><i class="kw">using</i> System<i class="pu">;</i></div><div class="ln" style="top:24px"><i class="kw">using</i> System<i class="pu">.</i>Collections<i class="pu">;</i></div><div class="ln" style="top:47px"><i class="kw">using</i> System<i class="pu">.</i>Collections<i class="pu">.</i>Generic<i class="pu">;</i></div><div class="ln" style="top:70px"><i class="kw">using</i> UnityEngine<i class="pu">;</i></div><div class="ln" style="top:93px"><i class="kw">using</i> System<i class="pu">.</i>IO<i class="pu">;</i></div><div class="ln" style="top:116px"><i class="kw">using</i> UnityEngine<i class="pu">.</i>SceneManagement<i class="pu">;</i></div><div class="ln" style="top:139px">&#8203;</div><div class="ln" style="top:162px"><i class="kw">public</i> <i class="ty">class</i> LoadLibrary <i class="pu">:</i> MonoBehaviour <i class="op">{</i></div><div class="ln" style="top:185px">&#8203;</div><div class="ln" style="top:208px">    <i class="kw">public</i> List<i class="op">&lt;</i>ReviewEntry<i class="op">&gt;</i> library <i class="op">=</i> <i class="kw">new</i> List<i class="op">&lt;</i>ReviewEntry<i class="op">&gt;</i> <i class="op">(</i><i class="op">)</i><i class="pu">;</i></div><div class="ln" style="top:231px">    <i class="kw">public</i> List<i class="op">&lt;</i>FileInfo<i class="op">&gt;</i> libraryFiles <i class="op">=</i> <i class="kw">new</i> List<i class="op">&lt;</i>FileInfo<i class="op">&gt;</i> <i class="op">(</i><i class="op">)</i><i class="pu">;</i></div><div class="ln" style="top:254px">    <i class="kw">public</i> <i class="ty">string</i> folder <i class="op">=</i> <i class="st">&quot;&quot;</i><i class="pu">;</i></div><div class="ln" style="top:277px">&#8203;</div><div class="ln" style="top:300px">    <i class="ty">string</i> reviewList <i class="op">=</i> <i class="st">&quot;&quot;</i><i class="pu">;</i></div><div class="ln" style="top:323px">&#8203;</div><div class="ln" style="top:346px">    <i class="kw">public</i> UnityEngine<i class="pu">.</i>UI<i class="pu">.</i>Text listText <i class="op">=</i> <i class="kw">null</i><i class="pu">;</i></div><div class="ln" style="top:369px">&#8203;</div><div class="ln" style="top:392px">    <i class="cm">// Use this for initialization</i></div><div class="ln" style="top:415px">    <i class="ty">void</i> Start <i class="op">(</i><i class="op">)</i> <i class="op">{</i></div><div class="ln" style="top:438px">        <i class="cm">// attempt to force less updates per second, therefore, less battery</i></div><div class="ln" style="top:461px">        QualitySettings<i class="pu">.</i>vSyncCount <i class="op">=</i> <i class="nu">0</i><i class="pu">;</i></div><div class="ln" style="top:484px">        Application<i class="pu">.</i>targetFrameRate <i class="op">=</i> <i class="nu">15</i><i class="pu">;</i></div><div class="ln" style="top:507px">&#8203;</div><div class="ln" style="top:530px">        <i class="kw">if</i> <i class="op">(</i>folder <i class="op">=</i><i class="op">=</i> <i class="st">&quot;&quot;</i><i class="op">)</i> <i class="op">{</i></div><div class="ln" style="top:553px">            folder <i class="op">=</i> <i class="st">&quot;/Resources/ReviewFiles/&quot;</i><i class="pu">;</i></div><div class="ln" style="top:576px">        <i class="op">}</i></div><div class="ln" style="top:599px">&#8203;</div><div class="ln" style="top:622px">        DirectoryInfo dir <i class="op">=</i> <i class="kw">new</i> DirectoryInfo <i class="op">(</i>Application<i class="pu">.</i>dataPath <i class="op">+</i> folder<i class="op">)</i><i class="pu">;</i></div><div class="ln" style="top:645px">        FileInfo<i class="op">[</i><i class="op">]</i> info <i class="op">=</i> dir<i class="pu">.</i>GetFiles <i class="op">(</i><i class="st">&quot;*.txt&quot;</i><i class="op">)</i><i class="pu">;</i></div><div class="ln" style="top:668px">        <i class="cm">//dir.GetFiles ();</i></div><div class="ln" style="top:691px">        <i class="ty">int</i> totalFiles <i class="op">=</i> <i class="nu">0</i><i class="pu">;</i></div><div class="ln" style="top:714px">&#8203;</div><div class="ln" style="top:737px">        <i class="kw">foreach</i> <i class="op">(</i>FileInfo f <i class="kw">in</i> info<i class="op">)</i> <i class="op">{</i></div><div class="ln" style="top:760px">            Debug<i class="pu">.</i>Log <i class="op">(</i><i class="st">&quot;opening &quot;</i> <i class="op">+</i> f<i class="pu">.</i>Name<i class="op">)</i><i class="pu">;</i></div><div class="ln" style="top:783px">            StreamReader sr <i class="op">=</i> f<i class="pu">.</i>OpenText <i class="op">(</i><i class="op">)</i><i class="pu">;</i></div><div class="ln" style="top:806px">            <i class="ty">string</i> s <i class="op">=</i> <i class="st">&quot;&quot;</i><i class="pu">;</i></div><div class="ln" style="top:829px">            <i class="ty">string</i> sTemp <i class="op">=</i> <i class="st">&quot;&quot;</i><i class="pu">;</i></div><div class="ln" style="top:852px">            <i class="kw">while</i> <i class="op">(</i><i class="op">(</i>sTemp <i class="op">=</i> sr<i class="pu">.</i>ReadLine<i class="op">(</i><i class="op">)</i><i class="op">)</i> <i class="op">!</i><i class="op">=</i> <i class="kw">null</i><i class="op">)</i><i class="op">{</i></div><div class="ln" style="top:875px">                s <i class="op">+</i><i class="op">=</i> sTemp<i class="pu">;</i></div><div class="ln" style="top:898px">            <i class="op">}</i></div><div class="ln" style="top:921px">            ReviewEntry r <i class="op">=</i> JsonUtility<i class="pu">.</i>FromJson <i class="op">&lt;</i>ReviewEntry<i class="op">&gt;</i><i class="op">(</i>s<i class="op">)</i><i class="pu">;</i></div><div class="ln" style="top:944px">            r<i class="pu">.</i>loadFile <i class="op">=</i> f<i class="pu">;</i></div><div class="ln" style="top:967px">            library<i class="pu">.</i>Add <i class="op">(</i>r<i class="op">)</i><i class="pu">;</i></div><div class="ln" style="top:990px">            libraryFiles<i class="pu">.</i>Add <i class="op">(</i>f<i class="op">)</i><i class="pu">;</i></div><div class="ln" style="top:1013px">            totalFiles<i class="op">+</i><i class="op">+</i><i class="pu">;</i></div><div class="ln" style="top:1036px">        <i class="op">}</i></div><div class="ln" style="top:1059px">&#8203;</div><div class="ln" style="top:1082px">        Debug<i class="pu">.</i>Log<i class="op">(</i><i class="st">&quot;total files in &quot;</i> <i class="op">+</i> folder <i class="op">+</i> <i class="st">&quot; (or  &quot;</i> <i class="op">+</i> <i class="op">(</i>Application<i class="pu">.</i>dataPath <i class="op">+</i> folder<i class="op">)</i> <i class="op">+</i> <i class="st">&quot;): &quot;</i> <i class="op">+</i> totalFiles<i class="op">)</i><i class="pu">;</i></div><div class="ln" style="top:1105px">&#8203;</div><div class="ln" style="top:1128px">        UpdateList <i class="op">(</i><i class="op">)</i><i class="pu">;</i></div></div><div class="abs" style="left:856px;top:180px;width:1px;height:238px;background:#808080"></div><div class="abs" style="left:856px;top:433px;width:1px;height:1148px;background:#ff0000"></div><div class="abs" style="left:849px;top:165px;width:15px;height:15px;border:1px solid #808080;background:#f3f3f3"></div><div class="abs" style="left:852px;top:172px;width:9px;height:1px;background:#808080"></div><div class="abs" style="left:849px;top:418px;width:15px;height:15px;border:1px solid #ff0000;background:#fff"></div><div class="abs" style="left:852px;top:425px;width:9px;height:1px;background:#ff0000"></div><div class="abs" style="left:849px;top:533px;width:15px;height:15px;border:1px solid #808080;background:#f3f3f3"></div><div class="abs" style="left:849px;top:533px;width:8px;height:15px;border:1px solid #ff0000;border-right:none"></div><div class="abs" style="left:852px;top:540px;width:9px;height:1px;background:#808080"></div><div class="abs" style="left:849px;top:740px;width:15px;height:15px;border:1px solid #808080;background:#f3f3f3"></div><div class="abs" style="left:849px;top:740px;width:8px;height:15px;border:1px solid #ff0000;border-right:none"></div><div class="abs" style="left:852px;top:747px;width:9px;height:1px;background:#808080"></div><div class="abs" style="left:849px;top:855px;width:15px;height:15px;border:1px solid #808080;background:#f3f3f3"></div><div class="abs" style="left:849px;top:855px;width:8px;height:15px;border:1px solid #ff0000;border-right:none"></div><div class="abs" style="left:852px;top:862px;width:9px;height:1px;background:#808080"></div><div class="abs" style="left:857px;top:586px;width:7px;height:1px;background:#808080"></div><div class="abs" style="left:857px;top:908px;width:7px;height:1px;background:#808080"></div><div class="abs" style="left:857px;top:1046px;width:7px;height:1px;background:#808080"></div><div class="abs" style="left:914px;top:437px;width:1px;height:713px;background-image:linear-gradient(#808080 50%,transparent 50%);background-size:1px 2px"></div><div class="abs" style="left:962px;top:552px;width:1px;height:23px;background-image:linear-gradient(#808080 50%,transparent 50%);background-size:1px 2px"></div><div class="abs" style="left:962px;top:759px;width:1px;height:276px;background-image:linear-gradient(#808080 50%,transparent 50%);background-size:1px 2px"></div><div class="abs" style="left:1010px;top:874px;width:1px;height:23px;background-image:linear-gradient(#808080 50%,transparent 50%);background-size:1px 2px"></div><div class="abs" style="left:866px;top:460px;width:1px;height:23px;background:#8000ff"></div><div class="num" style="top:0px">1</div><div class="num" style="top:23px">2</div><div class="num" style="top:46px">3</div><div class="num" style="top:69px">4</div><div class="num" style="top:92px">5</div><div class="num" style="top:115px">6</div><div class="num" style="top:138px">7</div><div class="num" style="top:161px">8</div><div class="num" style="top:184px">9</div><div class="num" style="top:207px">10</div><div class="num" style="top:230px">11</div><div class="num" style="top:253px">12</div><div class="num" style="top:276px">13</div><div class="num" style="top:299px">14</div><div class="num" style="top:322px">15</div><div class="num" style="top:345px">16</div><div class="num" style="top:368px">17</div><div class="num" style="top:391px">18</div><div class="num" style="top:414px">19</div><div class="num" style="top:437px">20</div><div class="num" style="top:460px">21</div><div class="num" style="top:483px">22</div><div class="num" style="top:506px">23</div><div class="num" style="top:529px">24</div><div class="num" style="top:552px">25</div><div class="num" style="top:575px">26</div><div class="num" style="top:598px">27</div><div class="num" style="top:621px">28</div><div class="num" style="top:644px">29</div><div class="num" style="top:667px">30</div><div class="num" style="top:690px">31</div><div class="num" style="top:713px">32</div><div class="num" style="top:736px">33</div><div class="num" style="top:759px">34</div><div class="num" style="top:782px">35</div><div class="num" style="top:805px">36</div><div class="num" style="top:828px">37</div><div class="num" style="top:851px">38</div><div class="num" style="top:874px">39</div><div class="num" style="top:897px">40</div><div class="num" style="top:920px">41</div><div class="num" style="top:943px">42</div><div class="num" style="top:966px">43</div><div class="num" style="top:989px">44</div><div class="num" style="top:1012px">45</div><div class="num" style="top:1035px">46</div><div class="num" style="top:1058px">47</div><div class="num" style="top:1081px">48</div><div class="num" style="top:1104px">49</div><div class="num" style="top:1127px">50</div><div class="abs" style="left:866px;top:660px;width:756px;height:6px;background:#fff"></div><div class="abs" style="left:784px;top:660px;width:63px;height:6px;background:#e3e3e3"></div></div></div><div class="abs" style="left:780px;top:0;width:3px;height:5px;background:linear-gradient(90deg,#a2a2a2 0 33.3%,#646464 33.3% 66.6%,#ececec 66.6%)"></div></body></html>
